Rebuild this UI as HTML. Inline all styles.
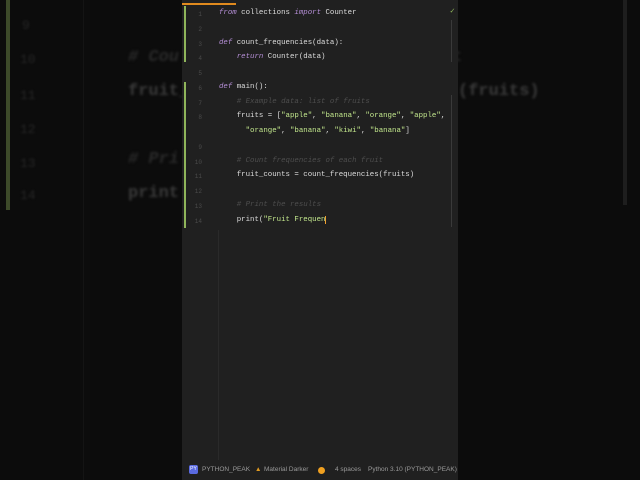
<!DOCTYPE html>
<html><head><style>
*{margin:0;padding:0;box-sizing:border-box}
body{width:640px;height:480px;background:#0c0c0c;overflow:hidden;position:relative;font-family:"Liberation Mono",monospace}
.bg{position:absolute;color:#3a3a3a;font-size:17px;font-weight:bold;filter:blur(1.2px);white-space:pre}
.bgn{position:absolute;color:#262626;font-size:13px;filter:blur(1px)}
#ed{position:absolute;left:182px;top:0;width:276px;height:480px;background:#202020}
.ln{position:absolute;left:6px;width:14px;text-align:right;font-size:6px;color:#4a4a4a}
.c{position:absolute;left:37px;font-size:7.4px;color:#dcdcdc;white-space:pre;line-height:10px}
.k{color:#b790d9;font-style:italic}
.s{color:#c3e88d}
.cm{color:#4e4e4e;font-style:italic}
.status{position:absolute;top:466px;font-family:"Liberation Sans",sans-serif;font-size:6.5px;color:#9a9a9a}
</style></head><body>
<div style="position:absolute;left:6px;top:0;width:4px;height:210px;background:#3d4a2a"></div>
<div style="position:absolute;left:83px;top:0;width:1px;height:480px;background:#141414"></div>
<div style="position:absolute;left:623px;top:0;width:4px;height:205px;background:#1e1e1e"></div>
<div class="bgn" style="left:22px;top:18px">9</div>
<div class="bgn" style="left:20px;top:52px">10</div>
<div class="bgn" style="left:20px;top:88px">11</div>
<div class="bgn" style="left:20px;top:122px">12</div>
<div class="bgn" style="left:20px;top:156px">13</div>
<div class="bgn" style="left:20px;top:188px">14</div>
<div class="bg" style="left:128px;top:48px;color:#2a2a2a;font-style:italic"># Cou</div>
<div class="bg" style="left:128px;top:82px">fruit_</div>
<div class="bg" style="left:128px;top:150px;color:#2a2a2a;font-style:italic"># Pri</div>
<div class="bg" style="left:128px;top:184px">print</div>
<div class="bg" style="left:452px;top:48px;color:#2a2a2a">t</div>
<div class="bg" style="left:458px;top:82px">(fruits)</div>
<div id="ed">
<div style="position:absolute;left:0;top:3px;width:54px;height:2px;background:#e08a1e"></div>
<div style="position:absolute;left:2px;top:6px;width:2px;height:56px;background:#8fb55a"></div>
<div style="position:absolute;left:2px;top:82px;width:2px;height:146px;background:#8fb55a"></div>
<div style="position:absolute;left:36px;top:230px;width:1px;height:230px;background:#2a2a2a"></div>
<div style="position:absolute;left:269px;top:20px;width:1px;height:42px;background:#3a3a3a"></div>
<div style="position:absolute;left:269px;top:95px;width:1px;height:132px;background:#3a3a3a"></div>
<div style="position:absolute;left:268px;top:6px;font-size:8px;color:#8fb55a">✓</div>
<div class="ln" style="top:11px">1</div><div class="ln" style="top:26px">2</div><div class="ln" style="top:41px">3</div><div class="ln" style="top:55px">4</div><div class="ln" style="top:70px">5</div><div class="ln" style="top:85px">6</div><div class="ln" style="top:100px">7</div><div class="ln" style="top:114px">8</div><div class="ln" style="top:144px">9</div><div class="ln" style="top:159px">10</div><div class="ln" style="top:173px">11</div><div class="ln" style="top:188px">12</div><div class="ln" style="top:203px">13</div><div class="ln" style="top:218px">14</div>
<div class="c" style="top:8px"><span class="k">from</span> collections <span class="k">import</span> Counter</div>
<div class="c" style="top:38px"><span class="k">def</span> count_frequencies(data):</div>
<div class="c" style="top:52px">    <span class="k">return</span> Counter(data)</div>
<div class="c" style="top:82px"><span class="k">def</span> main():</div>
<div class="c" style="top:97px">    <span class="cm"># Example data: list of fruits</span></div>
<div class="c" style="top:111px">    fruits = [<span class="s">"apple"</span>, <span class="s">"banana"</span>, <span class="s">"orange"</span>, <span class="s">"apple"</span>,</div>
<div class="c" style="top:126px">      <span class="s">"orange"</span>, <span class="s">"banana"</span>, <span class="s">"kiwi"</span>, <span class="s">"banana"</span>]</div>
<div class="c" style="top:156px">    <span class="cm"># Count frequencies of each fruit</span></div>
<div class="c" style="top:170px">    fruit_counts = count_frequencies(fruits)</div>
<div class="c" style="top:200px">    <span class="cm"># Print the results</span></div>
<div class="c" style="top:215px">    print(<span class="s">"Fruit Frequen</span><span style="border-left:1px solid #f0a030"></span></div>
<div style="position:absolute;left:7px;top:465px;width:9px;height:9px;background:#5a6ae0;border-radius:2px;font-size:5px;color:#fff;text-align:center;line-height:9px;font-family:'Liberation Sans'">PY</div>
<div class="status" style="left:20px">PYTHON_PEAK</div>
<div class="status" style="left:73px;color:#e09a20">▲</div>
<div class="status" style="left:82px">Material Darker</div>
<div style="position:absolute;left:136px;top:467px;width:7px;height:7px;border-radius:50%;background:#f0a020"></div>
<div class="status" style="left:153px">4 spaces</div>
<div class="status" style="left:186px">Python 3.10 (PYTHON_PEAK)</div>
</div>
</body></html>
